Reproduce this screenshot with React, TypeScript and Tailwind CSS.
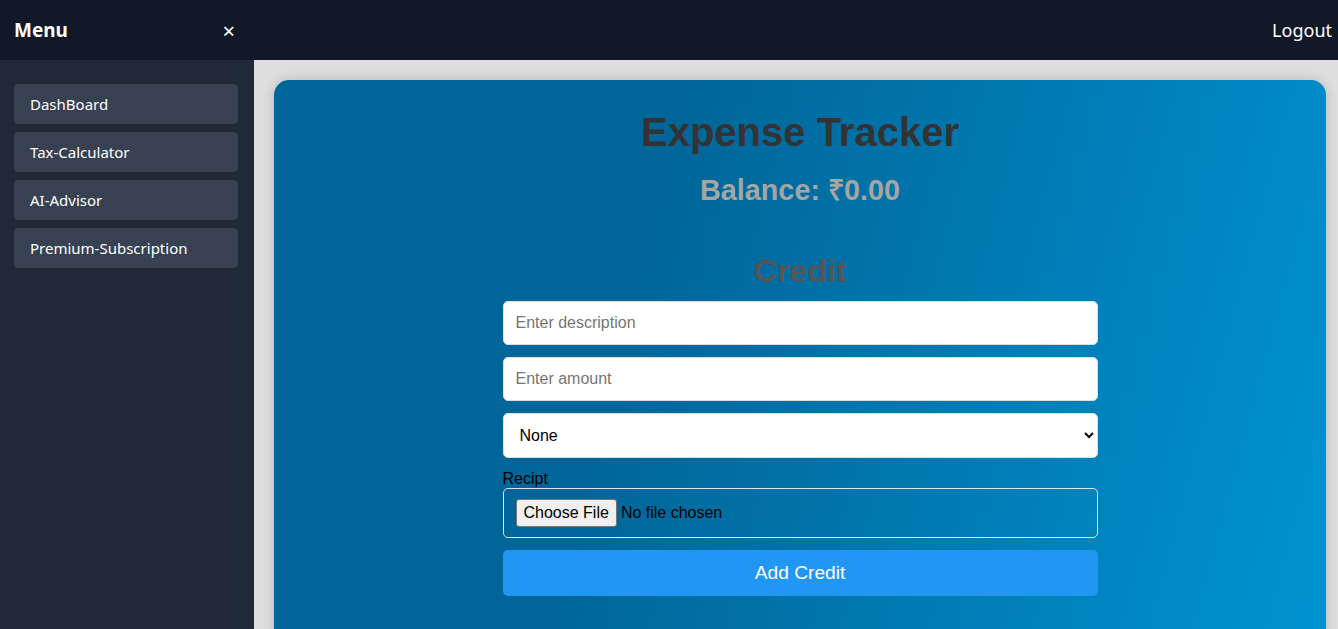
import React from 'react';

const links = ['DashBoard', 'Tax-Calculator', 'AI-Advisor', 'Premium-Subscription'];

const App: React.FC = () => {
  return (
    <div className="h-[629px] overflow-hidden flex flex-col bg-[#dedede] font-['Noto_Sans',sans-serif]">
      {/* top bar */}
      <header className="h-[60px] shrink-0 flex items-center bg-[#111827] text-white">
        <div className="w-[254px] flex items-center justify-between pl-[14px] pr-[19px]">
          <span className="text-[19px] font-bold">Menu</span>
          <button className="text-[22px] leading-none">×</button>
        </div>
        <div className="flex-1" />
        <button className="text-[18px] pr-[6px]">Logout</button>
      </header>

      <div className="flex flex-1 min-h-0">
        {/* sidebar */}
        <aside className="w-[254px] shrink-0 bg-[#1f2937] pt-6 pl-[14px] pr-4 flex flex-col gap-2">
          {links.map((l) => (
            <a key={l} className="h-10 flex items-center pl-4 rounded bg-[#374151] text-white text-[15px]">
              {l}
            </a>
          ))}
        </aside>

        {/* main */}
        <main className="flex-1 pt-5 pl-5 pr-3">
          <div className="min-h-[600px] rounded-[15px] bg-[linear-gradient(105deg,#006699_35%,#0094d2)] shadow-[0_0_12px_rgba(0,0,0,0.18)] pt-[29px] font-['Liberation_Sans',Arial,sans-serif]">
            <h1 className="text-center text-[40px] leading-[46px] font-bold text-[#333]">Expense Tracker</h1>
            <h2 className="mt-[19px] text-center text-[28.8px] leading-[32px] font-bold text-[#a5a5a2]">Balance: ₹0.00</h2>
            <h2 className="mt-[47px] text-center text-[32px] leading-[37px] font-bold text-[#555]">Credit</h2>

            <form className="w-[595px] mx-auto mt-[11px] flex flex-col">
              <input
                placeholder="Enter description"
                className="h-11 rounded-[5px] bg-white border border-[#ddd] px-3 text-base text-black placeholder:text-[#757575] outline-none"
              />
              <input
                placeholder="Enter amount"
                className="mt-3 h-11 rounded-[5px] bg-white border border-[#ddd] px-3 text-base text-black placeholder:text-[#757575] outline-none"
              />
              <select className="mt-3 h-[45px] rounded-[5px] bg-white border border-[#ddd] px-3 text-base text-black outline-none">
                <option>None</option>
              </select>
              <label className="mt-[11px] text-base leading-[19px] text-black">Recipt</label>
              <div className="h-[50px] rounded-[5px] border border-[#e5e5e5] px-3 flex items-center">
                <input
                  type="file"
                  className="text-base text-black file:mr-1 file:px-[7px] file:py-[1px] file:border file:border-[#767676] file:rounded-[3px] file:bg-[#efefef] file:text-black"
                />
              </div>
              <button
                type="button"
                className="mt-3 h-[46px] rounded-[5px] bg-[#2196f3] text-white text-[19.2px]"
              >
                Add Credit
              </button>
            </form>
          </div>
        </main>
      </div>
    </div>
  );
};

export default App;
